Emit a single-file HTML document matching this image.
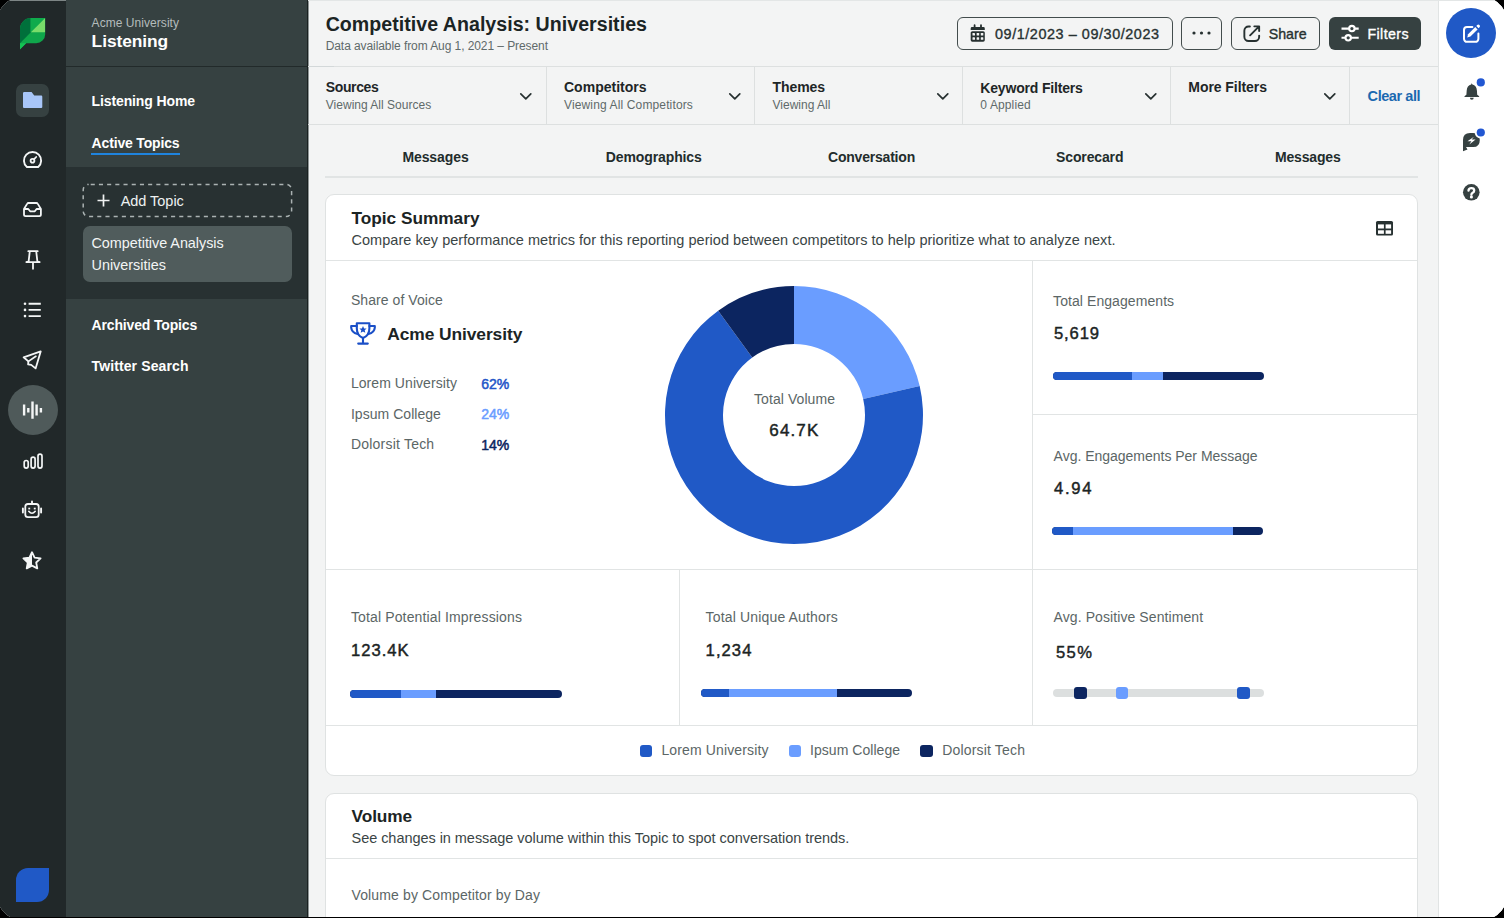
<!DOCTYPE html>
<html><head><meta charset="utf-8">
<style>
*{box-sizing:border-box;margin:0;padding:0}
html,body{width:1504px;height:918px;overflow:hidden;background:#000}
body{font-family:"Liberation Sans",sans-serif;position:relative}
.t{position:absolute;line-height:1;white-space:nowrap}
.r{position:absolute}
svg{position:absolute;overflow:visible}
#frame{position:absolute;left:0;top:0;width:1504px;height:917px;overflow:hidden;background:#f3f4f4;clip-path:polygon(0px 10px,1.1px 8.5px,2.1px 6.8px,3.2px 5.6px,4.4px 4.4px,5.6px 3.2px,6.8px 2.1px,8.5px 1.1px,10px 0px,1494px 0px,1495.5px 1.1px,1497.2px 2.1px,1498.4px 3.2px,1499.6px 4.4px,1500.8px 5.6px,1501.9px 6.8px,1502.9px 8.5px,1504px 10px,1504px 907px,1502.9px 908.5px,1501.9px 910.2px,1500.8px 911.4px,1499.6px 912.6px,1498.4px 913.8px,1497.2px 914.9px,1495.5px 915.9px,1494px 917px,10px 917px,8.5px 915.9px,6.8px 914.9px,5.6px 913.8px,4.4px 912.6px,3.2px 911.4px,2.1px 910.2px,1.1px 908.5px,0px 907px)}
</style></head>
<body>
<div id="frame">
<!-- left icon rail -->
<div class="r" style="left:0;top:0;width:66px;height:918px;background:#212829"></div>
<div class="r" style="left:10px;top:0;width:56px;height:1px;background:#7d8585"></div>
<!-- secondary sidebar -->
<div class="r" style="left:66px;top:0;width:242px;height:918px;background:#364141"></div>
<div class="r" style="left:66px;top:66px;width:242px;height:1px;background:#222a2a"></div>
<div class="r" style="left:66px;top:167px;width:242px;height:132px;background:#283132"></div>
<div class="r" style="left:307px;top:0;width:1px;height:918px;background:#1a2121"></div>
<div class="r" style="left:308px;top:0;width:1px;height:918px;background:#8f9696"></div>
<div class="r" style="left:91px;top:152.5px;width:89px;height:2.5px;background:#1f84de"></div>
<svg style="left:0;top:0" width="320" height="240"><rect x="83.2" y="184.4" width="208.4" height="32.2" rx="5.5" fill="none" stroke="#aab2b2" stroke-width="1.5" stroke-dasharray="4.1 4.1" stroke-dashoffset="-2"/></svg>
<svg style="left:97px;top:194px" width="13" height="13" viewBox="0 0 13 13"><path d="M6.5 0.5V12.5M0.5 6.5H12.5" stroke="#f0f2f2" stroke-width="1.7"/></svg>
<div class="r" style="left:83px;top:226px;width:209px;height:56px;background:#505c5c;border-radius:7px"></div>

<!-- main header -->
<div class="r" style="left:308px;top:0;width:1130px;height:1px;background:#e3e6e6"></div>
<div class="r" style="left:308px;top:66px;width:1130px;height:1px;background:#dde0e0"></div>
<div class="r" style="left:309px;top:66px;width:25px;height:1px;background:#d3d8d9"></div>
<div class="r" style="left:308px;top:124px;width:1130px;height:1px;background:#dde0e0"></div>
<div class="r" style="left:546px;top:66px;width:1px;height:58px;background:#dde0e0"></div>
<div class="r" style="left:754px;top:66px;width:1px;height:58px;background:#dde0e0"></div>
<div class="r" style="left:962px;top:66px;width:1px;height:58px;background:#dde0e0"></div>
<div class="r" style="left:1170px;top:66px;width:1px;height:58px;background:#dde0e0"></div>
<div class="r" style="left:1349px;top:66px;width:1px;height:58px;background:#dde0e0"></div>
<!-- buttons -->
<div class="r" style="left:957px;top:17px;width:216px;height:33px;border:1.5px solid #434d4d;border-radius:6px"></div>
<div class="r" style="left:1181px;top:17px;width:41px;height:33px;border:1.5px solid #434d4d;border-radius:6px"></div>
<div class="r" style="left:1231px;top:17px;width:89px;height:33px;border:1.5px solid #434d4d;border-radius:6px"></div>
<div class="r" style="left:1329px;top:17px;width:92px;height:33px;background:#364141;border-radius:6px"></div>

<!-- tabs border -->
<div class="r" style="left:325px;top:176px;width:1093px;height:1.5px;background:#e1e4e4"></div>

<!-- card 1 -->
<div class="r" style="left:325px;top:194px;width:1093px;height:582px;background:#fff;border:1px solid #dfe2e2;border-radius:9px"></div>
<div class="r" style="left:326px;top:260px;width:1091px;height:1px;background:#e1e4e4"></div>
<div class="r" style="left:1032px;top:261px;width:1px;height:464px;background:#e1e4e4"></div>
<div class="r" style="left:1033px;top:414px;width:384px;height:1px;background:#e1e4e4"></div>
<div class="r" style="left:326px;top:569px;width:1091px;height:1px;background:#e1e4e4"></div>
<div class="r" style="left:679px;top:570px;width:1px;height:155px;background:#e1e4e4"></div>
<div class="r" style="left:326px;top:725px;width:1091px;height:1px;background:#e1e4e4"></div>

<!-- card 2 -->
<div class="r" style="left:325px;top:793px;width:1093px;height:200px;background:#fff;border:1px solid #dfe2e2;border-radius:9px"></div>
<div class="r" style="left:326px;top:858px;width:1091px;height:1px;background:#e1e4e4"></div>

<!-- right rail -->
<div class="r" style="left:1438px;top:0;width:66px;height:918px;background:#fff;border-left:1px solid #e1e4e4"></div>
<div class="r" style="left:1438px;top:0;width:66px;height:1px;background:#e3e6e6"></div>

<svg style="left:20px;top:18px" width="26" height="32" viewBox="0 0 26 32">
<defs><clipPath id="lg"><path d="M11 0H25.2V16.2A9 9 0 0 1 16.2 25.2H6.2L0 31.6V11A11 11 0 0 1 11 0Z"/></clipPath></defs>
<g clip-path="url(#lg)">
<rect x="-1" y="-1" width="28" height="34" fill="#0fa64b"/>
<path d="M-1 -1H10.6V14.6L-1 26.2Z" fill="#00703b"/>
<path d="M10.6 -1H26L10.6 14.6Z" fill="#0fab4c"/>
<path d="M25.2 0V14.3H10.9Z" fill="#79dd6a"/>
<path d="M0 25.2L6.5 25.2L0 31.6Z" fill="#14c253"/>
</g></svg>
<div class="r" style="left:16px;top:84px;width:33px;height:33px;background:#364141;border-radius:7px"></div>
<svg style="left:23px;top:92px" width="20" height="17" viewBox="0 0 20 17"><path d="M1.2 0H8.6L11.2 3.6H18.2A1.1 1.1 0 0 1 19.3 4.7V14.9A1.1 1.1 0 0 1 18.2 16H1.2A1.1 1.1 0 0 1 0 14.9V1.2A1.2 1.2 0 0 1 1.2 0Z" fill="#a8c6f8"/></svg>
<svg style="left:23px;top:150.5px" width="20" height="18" viewBox="0 0 20 18"><path d="M3.92 16.05H15.18A8.6 8.6 0 1 0 3.92 16.05Z" fill="none" stroke="#f4f6f6" stroke-width="1.9" stroke-linejoin="round"/><circle cx="9.5" cy="9.8" r="1.9" fill="none" stroke="#f4f6f6" stroke-width="1.8"/><path d="M10.9 8.4L13.2 6" stroke="#f4f6f6" stroke-width="1.8" stroke-linecap="round"/></svg>
<svg style="left:23px;top:201.5px" width="20" height="16" viewBox="0 0 20 16"><path d="M1 7V12.6A1.6 1.6 0 0 0 2.6 14.2H16.3A1.6 1.6 0 0 0 17.9 12.6V7L14.8 1.9A1.8 1.8 0 0 0 13.3 1H5.6A1.8 1.8 0 0 0 4.1 1.9Z" fill="none" stroke="#f4f6f6" stroke-width="1.8" stroke-linejoin="round"/><path d="M1 7H5.3L7.1 9.3H11.8L13.6 7H17.9" fill="none" stroke="#f4f6f6" stroke-width="1.8" stroke-linejoin="round"/></svg>
<svg style="left:24.5px;top:249.5px" width="16" height="20" viewBox="0 0 16 20"><path d="M3.3 1.2H12.7M4.8 1.2L3.6 11.7M11.2 1.2L12.4 11.7M1.3 12.1H14.7M8 12.1V18.8" fill="none" stroke="#f4f6f6" stroke-width="1.8" stroke-linecap="round"/><path d="M3.6 11.7L1.3 12.1M12.4 11.7L14.7 12.1" stroke="#f4f6f6" stroke-width="1.8"/></svg>
<svg style="left:23px;top:302px" width="20" height="16" viewBox="0 0 20 16"><g fill="#f4f6f6"><circle cx="2" cy="1.8" r="1.3"/><circle cx="2" cy="7.9" r="1.3"/><circle cx="2" cy="14.1" r="1.3"/></g><path d="M5.6 1.8H17.8M5.6 7.9H17.8M5.6 14.1H17.8" stroke="#f4f6f6" stroke-width="1.9"/></svg>
<svg style="left:21px;top:348px" width="23" height="23" viewBox="0 0 23 23"><path d="M2.6 9.3L19.7 3.4 14.6 20.4 10.2 16.9 7.1 16.3 7.4 13.4Z" fill="none" stroke="#f4f6f6" stroke-width="1.8" stroke-linejoin="round"/><path d="M7.4 13.4L14.9 8.3" stroke="#f4f6f6" stroke-width="1.7" stroke-linecap="round"/></svg>
<div class="r" style="left:7.5px;top:385px;width:50px;height:50px;border-radius:50%;background:#4f5a5a"></div>
<svg style="left:22px;top:400px" width="21" height="20" viewBox="0 0 21 20"><path d="M2.1 4.6V15.6M6.3 8V12.6M10.5 1.5V18.7M14.6 4.6V15.6M18.9 8V12.6" stroke="#f4f6f6" stroke-width="2.4"/></svg>
<svg style="left:22.5px;top:452.5px" width="20" height="16" viewBox="0 0 20 16"><g fill="none" stroke="#f4f6f6" stroke-width="1.7"><rect x="1.2" y="7.5" width="4" height="7.6" rx="2"/><rect x="8.1" y="4.2" width="4" height="10.9" rx="2"/><rect x="15" y="1.2" width="4" height="13.9" rx="2"/></g></svg>
<svg style="left:21.1px;top:500px" width="22" height="19" viewBox="0 0 22 19"><rect x="4.3" y="4" width="13.4" height="13.2" rx="2.6" fill="none" stroke="#f4f6f6" stroke-width="1.8"/><path d="M11 1.4V3.9" stroke="#f4f6f6" stroke-width="1.9" stroke-linecap="round"/><path d="M1.9 8.4V12.6M20.1 8.4V12.6" stroke="#f4f6f6" stroke-width="1.9" stroke-linecap="round"/><rect x="7.3" y="7.7" width="1.9" height="1.7" fill="#f4f6f6"/><rect x="12.8" y="7.7" width="1.9" height="1.7" fill="#f4f6f6"/><path d="M7.8 11.3Q11 15.2 14.2 11.3" fill="none" stroke="#f4f6f6" stroke-width="1.7" stroke-linecap="round"/></svg>
<svg style="left:22.1px;top:550.5px" width="20" height="20" viewBox="0 0 20 20"><path d="M10 1.2L12.6 6.6 18.6 7.4 14.2 11.5 15.3 17.4 10 14.6 4.7 17.4 5.8 11.5 1.4 7.4 7.4 6.6Z" fill="none" stroke="#f4f6f6" stroke-width="1.8" stroke-linejoin="round"/><path d="M10 1.2L7.4 6.6 1.4 7.4 5.8 11.5 4.7 17.4 10 14.6Z" fill="#f4f6f6"/></svg>
<div class="r" style="left:16px;top:868px;width:33px;height:34px;background:#2059c6;border-radius:12px 0 12px 0"></div>
<svg style="left:970px;top:24px" width="16" height="18" viewBox="0 0 16 18"><path d="M4.6 1.2V3.5M11 1.2V3.5" stroke="#273131" stroke-width="1.8" stroke-linecap="round"/><path d="M0.7 5.9V4.4A1.3 1.3 0 0 1 2 3.1H13.5A1.3 1.3 0 0 1 14.8 4.4V5.9Z" fill="#273131"/><rect x="0.7" y="7.2" width="14.1" height="10.5" rx="1.6" fill="#273131"/><g fill="#f3f4f4"><rect x="2.5" y="9.1" width="2.5" height="2.5" rx="0.4"/><rect x="6.65" y="9.1" width="2.5" height="2.5" rx="0.4"/><rect x="10.8" y="9.1" width="2.5" height="2.5" rx="0.4"/><rect x="2.5" y="13.3" width="2.5" height="2.5" rx="0.4"/><rect x="6.65" y="13.3" width="2.5" height="2.5" rx="0.4"/><rect x="10.8" y="13.3" width="2.5" height="2.5" rx="0.4"/></g></svg>
<svg style="left:1192px;top:31px" width="19" height="4" viewBox="0 0 19 4"><g fill="#273131"><circle cx="2" cy="2" r="1.6"/><circle cx="9.5" cy="2" r="1.6"/><circle cx="17" cy="2" r="1.6"/></g></svg>
<svg style="left:1243px;top:24.5px" width="18" height="18" viewBox="0 0 18 18"><path d="M6.9 1.45H5.6A4.2 4.2 0 0 0 1.35 5.65V11.85A4.2 4.2 0 0 0 5.55 16.05H11.95A4.2 4.2 0 0 0 16.15 11.85V10.6" fill="none" stroke="#273131" stroke-width="1.9" stroke-linecap="round"/><path d="M7.1 10.3L15.8 1.6M11.3 1.35H16.15V6.1" fill="none" stroke="#273131" stroke-width="1.9" stroke-linecap="round" stroke-linejoin="round"/></svg>
<svg style="left:1340px;top:23px" width="20" height="20" viewBox="0 0 20 20"><g stroke="#fff" stroke-width="2.1" fill="none"><path d="M1.5 5.6H9.2M14.6 5.6H18.7M1.5 14.8H5.5M10.9 14.8H18.7"/><circle cx="11.9" cy="5.6" r="2.7"/><circle cx="8.2" cy="14.8" r="2.7"/></g></svg>
<svg style="left:520.3px;top:93px" width="12" height="7" viewBox="0 0 12 7"><path d="M0.8 0.8L5.8 5.9 10.8 0.8" fill="none" stroke="#273131" stroke-width="1.7" stroke-linecap="round" stroke-linejoin="round"/></svg>
<svg style="left:728.5px;top:93px" width="12" height="7" viewBox="0 0 12 7"><path d="M0.8 0.8L5.8 5.9 10.8 0.8" fill="none" stroke="#273131" stroke-width="1.7" stroke-linecap="round" stroke-linejoin="round"/></svg>
<svg style="left:936.5px;top:93px" width="12" height="7" viewBox="0 0 12 7"><path d="M0.8 0.8L5.8 5.9 10.8 0.8" fill="none" stroke="#273131" stroke-width="1.7" stroke-linecap="round" stroke-linejoin="round"/></svg>
<svg style="left:1144.5px;top:92.8px" width="12" height="7" viewBox="0 0 12 7"><path d="M0.8 0.8L5.8 5.9 10.8 0.8" fill="none" stroke="#273131" stroke-width="1.7" stroke-linecap="round" stroke-linejoin="round"/></svg>
<svg style="left:1323.5px;top:93.2px" width="12" height="7" viewBox="0 0 12 7"><path d="M0.8 0.8L5.8 5.9 10.8 0.8" fill="none" stroke="#273131" stroke-width="1.7" stroke-linecap="round" stroke-linejoin="round"/></svg>
<svg style="left:1376px;top:220.5px" width="17" height="15" viewBox="0 0 17 15"><rect x="0" y="0" width="17" height="14.6" rx="1.6" fill="#273131"/><g fill="#fff"><rect x="2" y="3.4" width="5.9" height="4.1"/><rect x="9.6" y="3.4" width="5.5" height="4.1"/><rect x="2" y="9.3" width="5.9" height="3.5"/><rect x="9.6" y="9.3" width="5.5" height="3.5"/></g></svg>
<svg style="left:350px;top:321.5px" width="26" height="23" viewBox="0 0 26 23"><g fill="none" stroke="#1a4fc7" stroke-width="2.1" stroke-linecap="round" stroke-linejoin="round"><path d="M6.8 1.2H19.4V6.2Q19.4 13.5 13 16 6.8 13.5 6.8 6.2Z"/><path d="M6.8 4H1.2V5.6Q1.6 10.5 7.6 12M19.4 4H24.8V5.6Q24.4 10.5 18.4 12"/><path d="M13 16V21.6M8.2 21.6H17.8"/></g><path d="M13 4.1L14.1 6.4 16.6 6.6 14.7 8.3 15.3 10.7 13 9.5 10.7 10.7 11.3 8.3 9.4 6.6 11.9 6.4Z" fill="#1a4fc7"/></svg>
<svg style="left:0;top:0" width="1504" height="918" viewBox="0 0 1504 918"><path d="M794.00 286.00A129 129 0 0 1 919.69 385.98L863.18 399.03A71 71 0 0 0 794.00 344.00Z" fill="#6a9dff"/><path d="M919.69 385.98A129 129 0 1 1 718.18 310.64L752.27 357.56A71 71 0 1 0 863.18 399.03Z" fill="#2059c6"/><path d="M718.18 310.64A129 129 0 0 1 794.00 286.00L794.00 344.00A71 71 0 0 0 752.27 357.56Z" fill="#0c2560"/></svg>
<div class="r" style="left:1053px;top:372.2px;width:211.20000000000005px;height:8.2px;border-radius:4.1px;overflow:hidden;background:#0c2560"><div class="r" style="left:0;top:0;width:78.70000000000005px;height:8.2px;background:#2059c6"></div><div class="r" style="left:78.70000000000005px;top:0;width:31.200000000000045px;height:8.2px;background:#6a9dff"></div></div>
<div class="r" style="left:1052.4px;top:527.1px;width:210.79999999999995px;height:8.2px;border-radius:4.1px;overflow:hidden;background:#0c2560"><div class="r" style="left:0;top:0;width:20.799999999999955px;height:8.2px;background:#2059c6"></div><div class="r" style="left:20.799999999999955px;top:0;width:159.89999999999986px;height:8.2px;background:#6a9dff"></div></div>
<div class="r" style="left:350.4px;top:690.1px;width:211.39999999999998px;height:8.1px;border-radius:4.05px;overflow:hidden;background:#0c2560"><div class="r" style="left:0;top:0;width:50.200000000000045px;height:8.1px;background:#2059c6"></div><div class="r" style="left:50.200000000000045px;top:0;width:35.599999999999966px;height:8.1px;background:#6a9dff"></div></div>
<div class="r" style="left:700.9px;top:689px;width:210.89999999999998px;height:8.1px;border-radius:4.05px;overflow:hidden;background:#0c2560"><div class="r" style="left:0;top:0;width:28.200000000000045px;height:8.1px;background:#2059c6"></div><div class="r" style="left:28.200000000000045px;top:0;width:107.69999999999993px;height:8.1px;background:#6a9dff"></div></div>
<div class="r" style="left:1053px;top:689.3px;width:211.2px;height:7.8px;border-radius:4px;background:#dcdfdf"></div>
<div class="r" style="left:1074px;top:687px;width:12.6px;height:12.2px;border-radius:3px;background:#0c2560"></div>
<div class="r" style="left:1115.8px;top:687px;width:12.6px;height:12.2px;border-radius:3px;background:#6a9dff"></div>
<div class="r" style="left:1237px;top:687px;width:12.6px;height:12.2px;border-radius:3px;background:#2059c6"></div>
<div class="r" style="left:640px;top:745px;width:12.3px;height:11.5px;border-radius:3px;background:#2059c6"></div>
<div class="r" style="left:788.7px;top:745px;width:12.3px;height:11.5px;border-radius:3px;background:#6a9dff"></div>
<div class="r" style="left:920.3px;top:745px;width:12.3px;height:11.5px;border-radius:3px;background:#0c2560"></div>
<div class="r" style="left:1446.3px;top:8.2px;width:50px;height:50px;border-radius:50%;background:#2059c6"></div>
<svg style="left:1462px;top:23px" width="20" height="21" viewBox="-1 -3 20 21"><path d="M9.4 1H4A3 3 0 0 0 1 4V12.8A3 3 0 0 0 4 15.8H12.4A3 3 0 0 0 15.4 12.8V7.4" fill="none" stroke="#fff" stroke-width="2" stroke-linecap="round"/><path d="M4.2 11.6L5.1 8.3 12.3 1.1 14.6 3.4 7.4 10.6Z" fill="#fff"/><path d="M13.3 -0.1L14.2 -1A1.6 1.6 0 0 1 16.5 1.3L15.6 2.2Z" fill="#fff"/></svg>
<svg style="left:1463.5px;top:83px" width="16" height="18" viewBox="0 0 16 18"><path d="M7.7 0.3Q8.4 1.2 8.4 1.6Q12.6 2.6 12.9 7.5L13.2 11.8 15.2 13.3Q15.4 14 14.6 14H1Q0.2 14 0.4 13.3L2.4 11.8 2.7 7.5Q3 2.6 7.2 1.6Q7.2 1.2 7.7 0.3Z" fill="#364141"/><path d="M5.9 14.8A1.9 1.9 0 0 0 9.7 14.8Z" fill="#364141"/></svg>
<svg style="left:1463px;top:132.5px" width="18" height="19" viewBox="0 0 18 19"><path d="M7 0H10.2Q16.8 0 16.8 7Q16.8 14.1 10.2 14.1H3L4.5 16.6 0 18.3V7Q0 0 7 0Z" fill="#364141"/><path d="M10.9 3.7L4.5 8.3H8.4L6.3 11.5 12.6 6.6H8.7Z" fill="#fff"/></svg>
<svg style="left:1463.3px;top:184px" width="17" height="17" viewBox="0 0 17 17"><circle cx="8.3" cy="8.3" r="8.3" fill="#364141"/><path d="M5.5 6.6Q5.6 4.1 8.4 4.1Q11.2 4.1 11.2 6.4Q11.2 7.9 9.7 8.7Q8.4 9.4 8.4 10.7" fill="none" stroke="#fff" stroke-width="2.3" stroke-linecap="round"/><circle cx="8.4" cy="12.9" r="1.55" fill="#fff"/></svg>
<svg style="left:1470px;top:72px" width="22" height="72" viewBox="0 0 22 72"><circle cx="10.8" cy="10.4" r="5.6" fill="#fff"/><circle cx="10.8" cy="10.4" r="4.1" fill="#2257d2"/><circle cx="10.8" cy="60.5" r="6" fill="#fff"/><circle cx="10.8" cy="60.5" r="4.1" fill="#2257d2"/></svg>
<div class="t" style="left:91.6px;top:17.0px;font-size:12px;color:#b4bcbc;letter-spacing:0.051px;">Acme University</div>
<div class="t" style="left:91.6px;top:33.2px;font-size:17.4px;color:#ffffff;font-weight:bold;letter-spacing:-0.086px;">Listening</div>
<div class="t" style="left:91.6px;top:93.8px;font-size:14px;color:#ffffff;font-weight:bold;letter-spacing:-0.124px;">Listening Home</div>
<div class="t" style="left:91.6px;top:135.5px;font-size:14px;color:#ffffff;font-weight:bold;letter-spacing:-0.166px;">Active Topics</div>
<div class="t" style="left:120.7px;top:194.0px;font-size:14.5px;color:#eef1f1;letter-spacing:-0.035px;">Add Topic</div>
<div class="t" style="left:91.5px;top:235.6px;font-size:14.4px;color:#f3f5f5;letter-spacing:-0.030px;">Competitive Analysis</div>
<div class="t" style="left:91.5px;top:257.6px;font-size:14.4px;color:#f3f5f5;">Universities</div>
<div class="t" style="left:91.5px;top:317.7px;font-size:14px;color:#ffffff;font-weight:bold;letter-spacing:-0.156px;">Archived Topics</div>
<div class="t" style="left:91.5px;top:359.3px;font-size:14px;color:#ffffff;font-weight:bold;letter-spacing:0.120px;">Twitter Search</div>
<div class="t" style="left:325.7px;top:14.9px;font-size:19.6px;color:#1b2424;font-weight:bold;letter-spacing:0.023px;">Competitive Analysis: Universities</div>
<div class="t" style="left:325.7px;top:40.1px;font-size:12px;color:#5f6a6a;letter-spacing:-0.078px;">Data available from Aug 1, 2021 – Present</div>
<div class="t" style="left:995.0px;top:26.5px;font-size:14.4px;color:#273131;-webkit-text-stroke:0.35px #273131;letter-spacing:0.569px;">09/1/2023 – 09/30/2023</div>
<div class="t" style="left:1268.7px;top:26.7px;font-size:14.2px;color:#273131;-webkit-text-stroke:0.35px #273131;letter-spacing:0.035px;">Share</div>
<div class="t" style="left:1367.5px;top:26.7px;font-size:14.2px;color:#ffffff;-webkit-text-stroke:0.35px #ffffff;letter-spacing:0.397px;">Filters</div>
<div class="t" style="left:325.8px;top:79.7px;font-size:14px;color:#1e2627;font-weight:bold;letter-spacing:-0.375px;">Sources</div>
<div class="t" style="left:325.8px;top:98.8px;font-size:12px;color:#5f6a6a;letter-spacing:0.009px;">Viewing All Sources</div>
<div class="t" style="left:564.0px;top:79.7px;font-size:14px;color:#1e2627;font-weight:bold;letter-spacing:0.005px;">Competitors</div>
<div class="t" style="left:564.0px;top:98.8px;font-size:12px;color:#5f6a6a;letter-spacing:0.136px;">Viewing All Competitors</div>
<div class="t" style="left:772.5px;top:79.7px;font-size:14px;color:#1e2627;font-weight:bold;letter-spacing:-0.082px;">Themes</div>
<div class="t" style="left:772.5px;top:98.8px;font-size:12px;color:#5f6a6a;">Viewing All</div>
<div class="t" style="left:980.3px;top:81.4px;font-size:14px;color:#1e2627;font-weight:bold;letter-spacing:-0.173px;">Keyword Filters</div>
<div class="t" style="left:980.3px;top:99.4px;font-size:12px;color:#5f6a6a;letter-spacing:0.120px;">0 Applied</div>
<div class="t" style="left:1188.3px;top:80.1px;font-size:14px;color:#1e2627;font-weight:bold;letter-spacing:-0.059px;">More Filters</div>
<div class="t" style="left:1367.6px;top:88.7px;font-size:14.5px;color:#1b69b0;font-weight:bold;letter-spacing:-0.428px;">Clear all</div>
<div class="t" style="left:402.4px;top:150.3px;font-size:14px;color:#222c2c;font-weight:bold;letter-spacing:-0.090px;">Messages</div>
<div class="t" style="left:605.8px;top:150.3px;font-size:14px;color:#222c2c;font-weight:bold;letter-spacing:-0.113px;">Demographics</div>
<div class="t" style="left:828.0px;top:150.3px;font-size:14px;color:#222c2c;font-weight:bold;letter-spacing:-0.206px;">Conversation</div>
<div class="t" style="left:1056.0px;top:150.3px;font-size:14px;color:#222c2c;font-weight:bold;letter-spacing:-0.123px;">Scorecard</div>
<div class="t" style="left:1275.0px;top:150.3px;font-size:14px;color:#222c2c;font-weight:bold;letter-spacing:-0.176px;">Messages</div>
<div class="t" style="left:351.5px;top:210.3px;font-size:17.3px;color:#1b2424;font-weight:bold;letter-spacing:-0.030px;">Topic Summary</div>
<div class="t" style="left:351.5px;top:232.6px;font-size:14.5px;color:#3a4545;letter-spacing:0.034px;">Compare key performance metrics for this reporting period between competitors to help prioritize what to analyze next.</div>
<div class="t" style="left:350.9px;top:293.1px;font-size:14px;color:#5b6666;letter-spacing:0.072px;">Share of Voice</div>
<div class="t" style="left:387.3px;top:325.6px;font-size:17.4px;color:#1b2424;font-weight:bold;letter-spacing:-0.092px;">Acme University</div>
<div class="t" style="left:350.9px;top:376.4px;font-size:14px;color:#5b6666;letter-spacing:0.065px;">Lorem University</div>
<div class="t" style="left:350.9px;top:406.6px;font-size:14px;color:#5b6666;letter-spacing:0.043px;">Ipsum College</div>
<div class="t" style="left:350.9px;top:437.1px;font-size:14px;color:#5b6666;letter-spacing:0.215px;">Dolorsit Tech</div>
<div class="t" style="left:481.2px;top:377.1px;font-size:14px;color:#2356c8;-webkit-text-stroke:0.5px #2356c8;">62%</div>
<div class="t" style="left:481.2px;top:407.3px;font-size:14px;color:#6a9dff;-webkit-text-stroke:0.5px #6a9dff;">24%</div>
<div class="t" style="left:481.2px;top:437.8px;font-size:14px;color:#0c2560;-webkit-text-stroke:0.5px #0c2560;">14%</div>
<div class="t" style="left:754.0px;top:391.6px;font-size:14px;color:#5b6666;letter-spacing:0.077px;">Total Volume</div>
<div class="t" style="left:769.3px;top:422.4px;font-size:17px;color:#1b2424;-webkit-text-stroke:0.45px #1b2424;letter-spacing:1.144px;">64.7K</div>
<div class="t" style="left:1053.1px;top:293.5px;font-size:14px;color:#5b6666;letter-spacing:0.072px;">Total Engagements</div>
<div class="t" style="left:1054.0px;top:326.2px;font-size:16.6px;color:#1b2424;-webkit-text-stroke:0.45px #1b2424;letter-spacing:0.869px;">5,619</div>
<div class="t" style="left:1053.6px;top:448.5px;font-size:14px;color:#5b6666;letter-spacing:-0.015px;">Avg. Engagements Per Message</div>
<div class="t" style="left:1054.0px;top:481.2px;font-size:16.6px;color:#1b2424;-webkit-text-stroke:0.45px #1b2424;letter-spacing:1.701px;">4.94</div>
<div class="t" style="left:350.9px;top:610.1px;font-size:14px;color:#5b6666;letter-spacing:0.142px;">Total Potential Impressions</div>
<div class="t" style="left:351.0px;top:643.2px;font-size:16.6px;color:#1b2424;-webkit-text-stroke:0.45px #1b2424;letter-spacing:1.001px;">123.4K</div>
<div class="t" style="left:705.6px;top:610.1px;font-size:14px;color:#5b6666;letter-spacing:0.160px;">Total Unique Authors</div>
<div class="t" style="left:705.6px;top:643.2px;font-size:16.6px;color:#1b2424;-webkit-text-stroke:0.45px #1b2424;letter-spacing:1.069px;">1,234</div>
<div class="t" style="left:1053.6px;top:610.1px;font-size:14px;color:#5b6666;letter-spacing:0.087px;">Avg. Positive Sentiment</div>
<div class="t" style="left:1056.0px;top:645.3px;font-size:16.6px;color:#1b2424;-webkit-text-stroke:0.45px #1b2424;letter-spacing:1.394px;">55%</div>
<div class="t" style="left:661.4px;top:743.1px;font-size:14px;color:#5b6666;letter-spacing:0.132px;">Lorem University</div>
<div class="t" style="left:810.0px;top:743.1px;font-size:14px;color:#5b6666;letter-spacing:0.043px;">Ipsum College</div>
<div class="t" style="left:942.2px;top:743.1px;font-size:14px;color:#5b6666;letter-spacing:0.174px;">Dolorsit Tech</div>
<div class="t" style="left:351.5px;top:807.9px;font-size:17.3px;color:#1b2424;font-weight:bold;letter-spacing:-0.087px;">Volume</div>
<div class="t" style="left:351.5px;top:830.6px;font-size:14.5px;color:#3a4545;letter-spacing:-0.044px;">See changes in message volume within this Topic to spot conversation trends.</div>
<div class="t" style="left:351.5px;top:887.8px;font-size:14px;color:#5b6666;letter-spacing:0.127px;">Volume by Competitor by Day</div>
</div>
</body></html>
